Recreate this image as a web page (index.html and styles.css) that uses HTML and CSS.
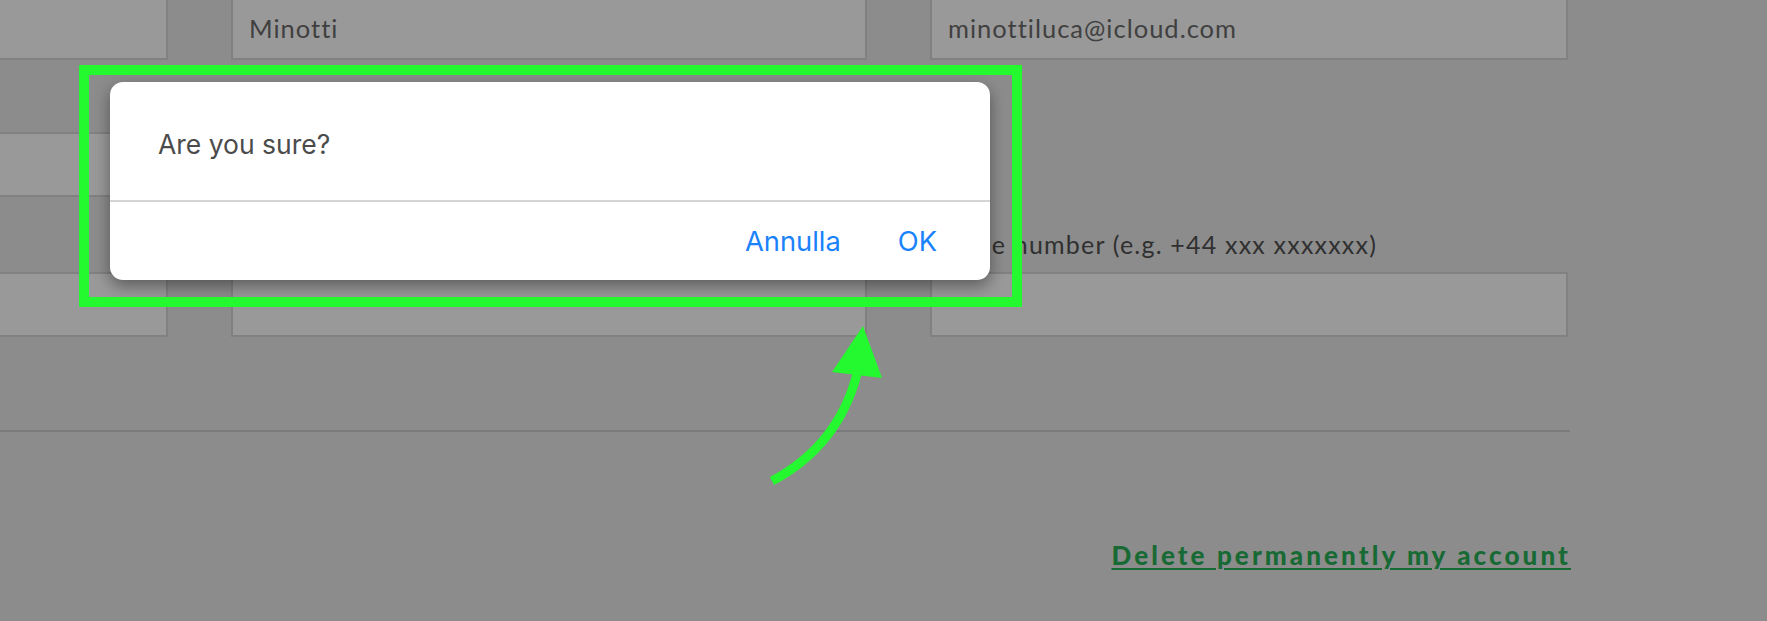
FILE: index.html
```html
<!DOCTYPE html>
<html lang="en">
<head>
<meta charset="utf-8">
<title>Account</title>
<link rel="stylesheet" href="styles.css">
</head>
<body>
<main class="page">
  <section class="form">
    <div class="row row-first">
      <div class="field"><div class="input"></div></div>
      <div class="field"><div class="input">Minotti</div></div>
      <div class="field"><div class="input">minottiluca@icloud.com</div></div>
    </div>
    <div class="row row-second">
      <div class="field"><div class="label"></div><div class="input"></div></div>
      <div class="field"><div class="label"></div><div class="input"></div></div>
      <div class="field"></div>
    </div>
    <div class="row row-third">
      <div class="field"><div class="label"></div><div class="input"></div></div>
      <div class="field"><div class="label"></div><div class="input"></div></div>
      <div class="field"><div class="label">Phone number (e.g. +44 xxx xxxxxxx)</div><div class="input"></div></div>
    </div>
  </section>
  <hr class="divider">
  <div class="actions">
    <a class="delete-link" href="#">Delete permanently my account</a>
  </div>
</main>

<div class="dialog" role="dialog">
  <div class="dialog-body">Are you sure?</div>
  <div class="dialog-actions">
    <span class="dialog-btn">Annulla</span>
    <span class="dialog-btn">OK</span>
  </div>
</div>

<div class="highlight"></div>
<svg class="arrow" width="180" height="200" viewBox="0 0 180 200">
  <path d="M32 181 Q98 146 117 74" fill="none" stroke="#24f82e" stroke-width="9"/>
  <polygon points="123,26 92,72 142,78" fill="#24f82e"/>
</svg>
</body>
</html>
```

FILE: styles.css
```css
html, body {
  margin: 0;
  padding: 0;
}
body {
  width: 1767px;
  height: 621px;
  overflow: hidden;
  background: #8c8c8c;
  font-family: "Lato", "Liberation Sans", sans-serif;
  position: relative;
}
.page {
  margin-left: -468px;
  width: 2038px;
}
.row {
  display: grid;
  grid-template-columns: 636px 636px 638px;
  column-gap: 63px;
}
.row-first { margin-top: -5px; }
.row-second { margin-top: 30px; }
.row-third { margin-top: 33px; }
.label {
  height: 28px;
  line-height: 28px;
  margin-bottom: 14px;
  font-size: 25px;
  letter-spacing: 1.2px;
  color: #303030;
  white-space: nowrap;
}
.input {
  box-sizing: border-box;
  height: 65px;
  background: #999999;
  border: 2px solid #818181;
  display: flex;
  align-items: center;
  padding-left: 16px;
  font-size: 25.5px;
  letter-spacing: 1px;
  color: #404040;
}
.divider {
  margin: 93px 0 0 0;
  border: 0;
  height: 2px;
  background: #7b7b7b;
}
.actions {
  display: flex;
  justify-content: flex-end;
  margin-top: 108px;
}
.delete-link {
  font-size: 26px;
  line-height: 30px;
  font-weight: 900;
  letter-spacing: 3.1px;
  margin-right: -1px;
  color: #176a33;
  text-decoration: underline;
  text-decoration-thickness: 2px;
  text-underline-offset: 3px;
}
.dialog {
  position: absolute;
  left: 110px;
  top: 82px;
  width: 880px;
  height: 198px;
  background: #ffffff;
  border-radius: 13px;
  box-shadow: 0 6px 16px rgba(0, 0, 0, 0.4);
  font-family: "Inter", "Liberation Sans", sans-serif;
  overflow: hidden;
}
.dialog-body {
  box-sizing: border-box;
  height: 118px;
  padding: 6px 0 0 48px;
  display: flex;
  align-items: center;
  font-size: 26.5px;
  color: #4b4b4b;
}
.dialog-actions {
  box-sizing: border-box;
  height: 80px;
  border-top: 2px solid #d5d5d5;
  display: flex;
  justify-content: flex-end;
  align-items: center;
  gap: 57px;
  padding-right: 53px;
}
.dialog-btn {
  font-size: 27.3px;
  color: #1a82fb;
}
.highlight {
  position: absolute;
  left: 79px;
  top: 65px;
  width: 943px;
  height: 242px;
  box-sizing: border-box;
  border: 10px solid #24f82e;
}
.arrow {
  position: absolute;
  left: 740px;
  top: 300px;
}
```
